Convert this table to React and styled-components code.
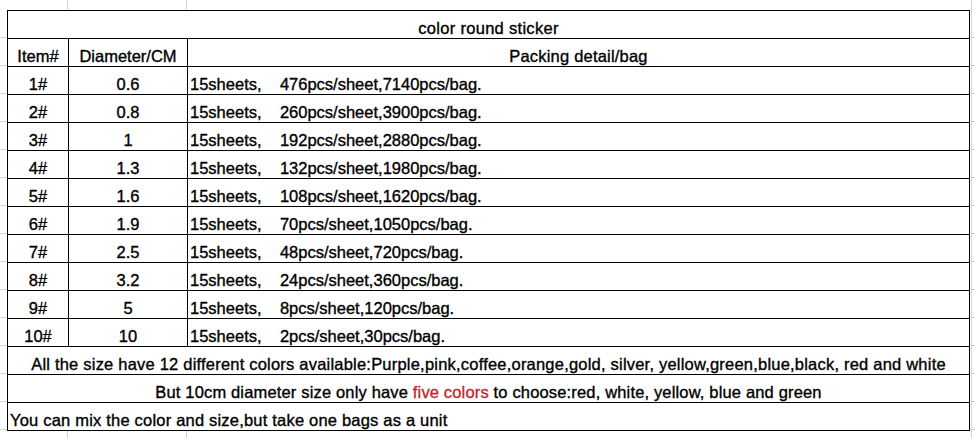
import React from "react";
import styled, { createGlobalStyle } from "styled-components";

const rows = [
  ["1#", "0.6", "476pcs/sheet,7140pcs/bag."],
  ["2#", "0.8", "260pcs/sheet,3900pcs/bag."],
  ["3#", "1", "192pcs/sheet,2880pcs/bag."],
  ["4#", "1.3", "132pcs/sheet,1980pcs/bag."],
  ["5#", "1.6", "108pcs/sheet,1620pcs/bag."],
  ["6#", "1.9", "70pcs/sheet,1050pcs/bag."],
  ["7#", "2.5", "48pcs/sheet,720pcs/bag."],
  ["8#", "3.2", "24pcs/sheet,360pcs/bag."],
  ["9#", "5", "8pcs/sheet,120pcs/bag."],
  ["10#", "10", "2pcs/sheet,30pcs/bag."],
];

export default function App() {
  return (
    <>
      <GlobalStyle />
      <Sheet>
        <Table>
          <colgroup>
            <col style={{ width: 61 }} />
            <col style={{ width: 119 }} />
            <col />
          </colgroup>
          <tbody>
            <Row>
              <Cell colSpan={3} $spacing="0.3px">color round sticker</Cell>
            </Row>
            <Row>
              <Cell>Item#</Cell>
              <Cell>Diameter/CM</Cell>
              <Cell $spacing="0.2px">Packing detail/bag</Cell>
            </Row>
            {rows.map((r, i) => (
              <Row key={i}>
                <Cell>{r[0]}</Cell>
                <Cell>{r[1]}</Cell>
                <Cell $left>{"15sheets,    " + r[2]}</Cell>
              </Row>
            ))}
            <Row>
              <Cell colSpan={3} $spacing="0.21px">
                All the size have 12 different colors available:Purple,pink,coffee,orange,gold, silver, yellow,green,blue,black, red and white
              </Cell>
            </Row>
            <Row>
              <Cell colSpan={3} $spacing="0.16px">
                But 10cm diameter size only have <Red>five colors</Red> to choose:red, white, yellow, blue and green
              </Cell>
            </Row>
            <Row>
              <Cell colSpan={3} $left $spacing="0.2px">
                You can mix the color and size,but take one bags as a unit
              </Cell>
            </Row>
          </tbody>
        </Table>
      </Sheet>
    </>
  );
}

const GlobalStyle = createGlobalStyle`
  html, body {
    margin: 0;
    padding: 0;
    background: #fff;
  }
  body {
    font-family: "Liberation Sans", Arial, sans-serif;
    color: #000;
  }
`;

const Sheet = styled.div`
  width: 975px;
  height: 438px;
  box-sizing: border-box;
  padding: 10px 0 0 7px;
  background-color: #fff;
  background-image:
    linear-gradient(to right, transparent 67px, #d4d4d4 67px, #d4d4d4 68px, transparent 68px),
    linear-gradient(to right, transparent 186px, #d4d4d4 186px, #d4d4d4 187px, transparent 187px),
    linear-gradient(to right, transparent 971px, #d4d4d4 971px, #d4d4d4 972px, transparent 972px),
    repeating-linear-gradient(to bottom, transparent 0, transparent 27px, #d4d4d4 27px, #d4d4d4 28px);
  background-position: 0 0, 0 0, 0 0, 0 10px;
  overflow: hidden;
`;

const Table = styled.table`
  border-collapse: collapse;
  width: 963px;
  table-layout: fixed;
  background: #fff;
  border: 1px solid #000;
`;

const Row = styled.tr`
  height: 28px;
`;

const Cell = styled.td`
  border: 1px solid #000;
  padding: 8px ${(p) => (p.$left ? "2px" : "0")} 0;
  height: 19px;
  font-size: 16.5px;
  letter-spacing: ${(p) => p.$spacing || "0"};
  -webkit-text-stroke: 0.35px #000;
  text-align: ${(p) => (p.$left ? "left" : "center")};
  white-space: pre;
  vertical-align: top;
  line-height: 19px;
`;

const Red = styled.span`
  color: #c0282d;
  -webkit-text-stroke: 0.35px #c0282d;
`;
